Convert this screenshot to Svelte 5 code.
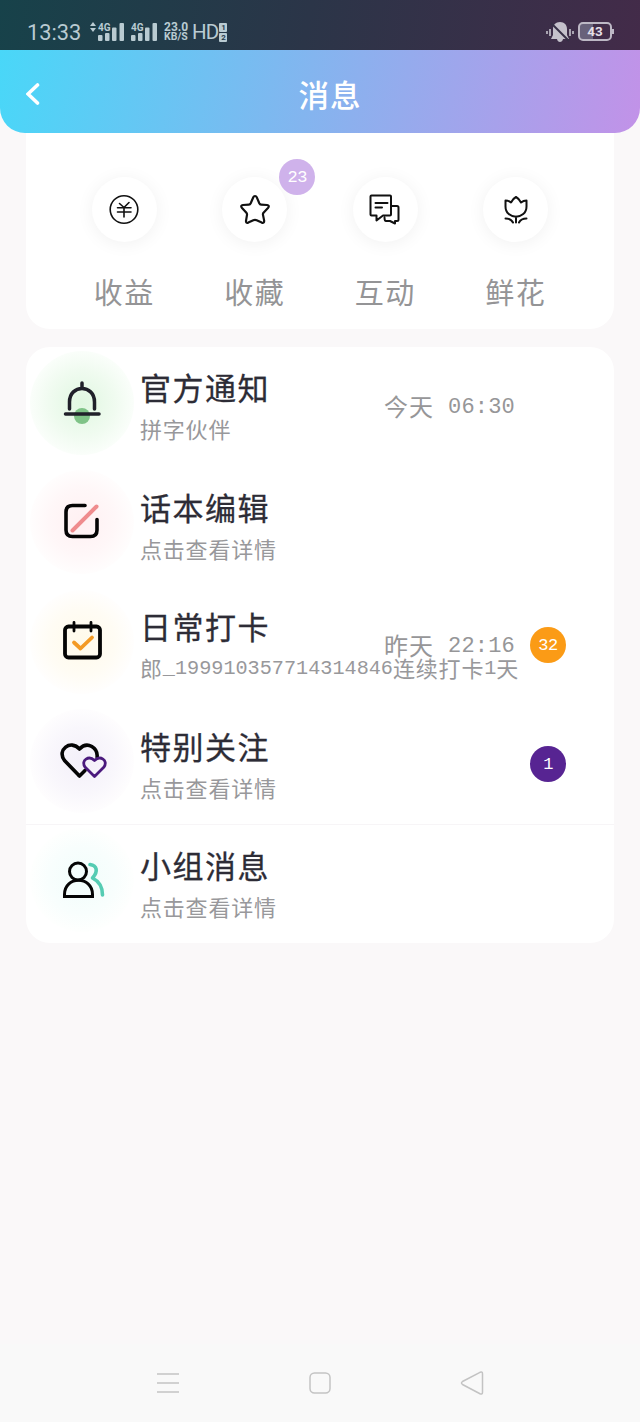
<script>
	const services = [
		{ icon: 'income', label: '收益' },
		{ icon: 'star', label: '收藏', badge: 23 },
		{ icon: 'chat', label: '互动' },
		{ icon: 'flower', label: '鲜花' }
	];

	const messages = [
		{ icon: 'bell', title: '官方通知', text: '拼字伙伴', day: '今天', time: '06:30' },
		{ icon: 'edit', title: '话本编辑', text: '点击查看详情' },
		{
			icon: 'calendar',
			title: '日常打卡',
			text: '郎_199910357714314846连续打卡1天',
			day: '昨天',
			time: '22:16',
			badge: 32
		},
		{ icon: 'heart', title: '特别关注', text: '点击查看详情', badge: 1 },
		{ icon: 'group', title: '小组消息', text: '点击查看详情' }
	];

	// digits use a narrower face than the Chinese characters
	const runs = (text) => text.match(/[\x20-\x7e]+|[^\x20-\x7e]+/g);
	const isLatin = (run) => /^[\x20-\x7e]/.test(run);
</script>

{#snippet signal()}
	<svg class="signal" width="27" height="20" viewBox="0 0 27 20">
		<text x="0" y="8.5">4G</text>
		<rect x="0" y="13" width="4.5" height="6" rx="1" />
		<rect x="7" y="11" width="4.5" height="8" rx="1" />
		<rect x="14" y="5.5" width="4.5" height="13.5" rx="1" />
		<rect x="21.5" y="1" width="4.5" height="18" rx="1" />
	</svg>
{/snippet}

<div class="screen">
	<div class="status">
		<span class="clock">13:33</span>
		<svg class="arrows" width="6" height="10" viewBox="0 0 6 10">
			<path d="M0 4 3 0l3 4zM0 6l3 4 3-4z" />
		</svg>
		{@render signal()}
		{@render signal()}
		<div class="speed"><span>23.0</span><span>KB/S</span></div>
		<span class="hd">HD</span>
		<div class="sims"><span>1</span><span>2</span></div>
		<svg class="mute" width="28" height="22" viewBox="0 0 28 22">
			<path d="M14 1c4.5 0 7 3 7 7v6l2 4H5l2-4V8c0-4 2.5-7 7-7zM11 18h6c-.5 4-5.5 4-6 0z" />
			<path class="slash" d="M5 2l18 18" />
			<path class="wave" d="M1 10v3M4 8v7M24 8v7M27 10v3" />
		</svg>
		<div class="battery"><span>43</span></div>
	</div>

	<header>
		<button class="back" type="button" aria-label="返回">
			<svg width="14" height="24" viewBox="0 0 14 24"><path d="M11.5 3 2 12l9.5 9" /></svg>
		</button>
		<h1>消息</h1>
	</header>

	<main>
		<section class="card services">
			{#each services as service}
				<div class="service">
					<div class="circle">
						<svg width="34" height="34" viewBox="0 0 34 34">
							{#if service.icon === 'income'}
								<g stroke-width="1.6">
									<circle cx="17" cy="16.5" r="13.8" />
									<path d="M12.5 10.5l4.500 4 5-5M10.500 14.800h13.500M10.500 19h13.500M17 14.500v9.500" />
								</g>
							{:else if service.icon === 'star'}
								<path d="M17 3q1.200 0 1.700 1.200l2.600 6q.6 1.300 1.800 1.400l5.900.4q2.800.5 1.200 2.700l-4.700 5q-.8 1-.5 2.200l1.200 6q0 2.500-2.500 1.700l-5-2.300q-1.700-.8-3.400 0l-5 2.300q-2.500.8-2.300-1.700l1-6q.2-1.200-.6-2.200l-4.600-5q-1.600-2.200 1.200-2.700l5.900-.4q1.200-.1 1.800-1.400l2.600-6q.5-1.200 1.700-1.200z" stroke-width="2.200" />
							{:else if service.icon === 'chat'}
								<path d="M3.500 2.500h18.500q1 0 1 1v18q0 1-1 1h-7l-6.500 5v-5h-5q-1 0-1-1v-18q0-1 1-1zM7.500 10h12M7.500 14.500h6.500M23 13h6q1.500 0 1.500 1.500v12q0 1.500-1.500 1.500h-2v2.500l-5-2.500h-4q-1.500 0-1.500-3.500" />
							{:else}
								<path d="M6.500 7.500q3 0 5.500 2 2-4 5-5.500 3 1.500 5 5.500 2.500-2 5.500-2v6c0 13.500-21 13.500-21 0zM17 23.500v6M6.500 25.500q5.500 0 7.500 4M27.500 25.500q-5.500 0-7.500 4" />
							{/if}
						</svg>
						{#if service.badge}
							<span class="badge lilac">{service.badge}</span>
						{/if}
					</div>
					<span class="label">{service.label}</span>
				</div>
			{/each}
		</section>

		<section class="card messages">
			{#each messages as message}
				<article class="row">
					<div class="glow {message.icon}">
						<svg width="50" height="50" viewBox="0 0 50 50">
							{#if message.icon === 'bell'}
								<circle cx="25" cy="38" r="8" fill="#7fc387" stroke="none" />
								<path d="M12.5 31v-7c0-18 25-18 25 0v7M25 10v-5M8.500 36h33.500" stroke="#20202a" stroke-width="3.500" />
							{:else if message.icon === 'edit'}
								<path d="M28 8.500h-12.500q-6.500 0-6.500 6.500v18q0 6.500 6.500 6.500h18q6.500 0 6.500-6.500v-10.500" stroke-width="3.600" />
								<path d="M15.500 33.500 39.500 9.500" stroke="#ef8c8e" stroke-width="4" />
							{:else if message.icon === 'calendar'}
								<rect x="8" y="9.500" width="35" height="31" rx="3.500" stroke-width="3.800" />
								<path d="M17 5.500v8.500M34 5.500v8.500" stroke-width="2.800" />
								<path d="M17 25.500l6.500 6 11.500-11" stroke="#f39a24" stroke-width="3.800" />
							{:else if message.icon === 'heart'}
								<path d="M22.500 40 7.500 24.500C-.500 14 13.500 3 22.500 13c8-8.500 19-1 17.500 9" stroke-width="3.600" stroke-linecap="butt" />
								<path d="M22.500 40l5.500-5.500" stroke-width="3.600" />
								<path d="M37.500 40.500l-9.500-9.500c-4.500-7 4-12 9.500-6.500 5.500-5.500 14-.5 9.500 6.500z" stroke="#4b1a7d" stroke-width="2.800" />
							{:else}
								<circle cx="21" cy="16.500" r="8.500" stroke-width="3" />
								<path d="M7.500 41.500v-2c0-19 28-19 28 0v2z" stroke-width="3" stroke-linejoin="miter" />
								<path d="M33 9.500c7 1 8.500 7 2.500 13.500 6 3 10 8 10 17" stroke="#55ccb3" stroke-width="3.600" />
							{/if}
						</svg>
					</div>
					<div class="body">
						<h2>{message.title}</h2>
						<p>{#each runs(message.text) as run}<span class:latin={isLatin(run)}>{run}</span>{/each}</p>
					</div>
					{#if message.time}
						<div class="time">{message.day}<span>{message.time}</span></div>
					{/if}
					{#if message.badge}
						<span class="badge" class:orange={message.badge > 9} class:purple={message.badge <= 9}>{message.badge}</span>
					{/if}
				</article>
			{/each}
		</section>
	</main>

	<nav>
		<svg width="24" height="26" viewBox="0 0 24 26"><path d="M1 4h22M1 13h22M1 22h22" /></svg>
		<svg width="24" height="26" viewBox="0 0 24 26"><rect x="2" y="3" width="20" height="20" rx="4.5" /></svg>
		<svg width="24" height="26" viewBox="0 0 24 26"><path d="M20 2.300 2.500 11.500q-2 1.500 0 3l17.500 9.200q2.500 1 2.500-1.500v-18.500q0-2.500-2.500-1.400z" /></svg>
	</nav>
</div>

<style>
	:global(body) {
		background: #faf8f9;
	}

	.screen {
		display: flex;
		flex-direction: column;
		height: 1422px;
		background: #faf8f9;
		font-family: "Noto Sans CJK SC", sans-serif;
		overflow: hidden;
	}

	h1,
	h2,
	p {
		margin: 0;
		font-weight: 400;
	}

	.status {
		display: flex;
		align-items: center;
		box-sizing: border-box;
		height: 50px;
		padding: 14px 26px 0 27px;
		background: linear-gradient(100deg, #17424a, #2b3548 48%, #432b49);
		color: #b9cbd2;
		fill: #b9cbd2;
		font-family: Roboto, sans-serif;
	}

	.clock {
		width: 63px;
		font-size: 21.8px;
	}

	.arrows {
		margin: -11px 2px 0 0;
	}

	.signal {
		margin-right: 6px;
	}

	.signal text {
		font-size: 10px;
		font-weight: 700;
	}

	.speed {
		display: grid;
		width: 28px;
		font-size: 10.5px;
		font-weight: 700;
		line-height: 10.5px;
	}

	.speed span:first-child {
		font-size: 12px;
	}

	.hd {
		font-size: 20.5px;
		letter-spacing: -0.8px;
	}

	.sims {
		display: grid;
		gap: 1px;
		margin-left: 1px;
	}

	.sims span {
		width: 8px;
		height: 9px;
		background: #b9cbd2;
		color: #25394a;
		border-radius: 1px;
		font-size: 8px;
		font-weight: 700;
		line-height: 9px;
		text-align: center;
	}

	.mute {
		margin-left: auto;
		fill: #c4c1cb;
	}

	.slash {
		stroke: #352f45;
		stroke-width: 2;
	}

	.wave {
		stroke: #c4c1cb;
		stroke-width: 1.6;
	}

	.battery {
		position: relative;
		box-sizing: border-box;
		width: 34px;
		height: 19px;
		margin: -1px 2px 0 4px;
		border: 2px solid #bdb8c5;
		border-radius: 5px;
		background: linear-gradient(90deg, #68617a 42%, transparent 42%);
		color: #e3dfe7;
		font-size: 13.5px;
		font-weight: 700;
		line-height: 15px;
		text-align: center;
	}

	.battery::after {
		content: '';
		position: absolute;
		top: 5px;
		right: -4px;
		width: 2px;
		height: 5px;
		background: #bdb8c5;
	}

	header {
		display: grid;
		grid-template-columns: 90px 1fr 70px;
		align-items: center;
		height: 83px;
		border-radius: 0 0 25px 25px;
		background: linear-gradient(100deg, #49d7f8, #83b5ef 48%, #c292e8);
		color: #fff;
	}

	.back {
		display: flex;
		padding: 5px 0 0 26px;
		border: 0;
		background: none;
	}

	.back path {
		fill: none;
		stroke: #fff;
		stroke-width: 3.6;
		stroke-linecap: round;
	}

	h1 {
		padding-top: 5px;
		font-size: 30.5px;
		font-weight: 500;
		letter-spacing: 1px;
		line-height: 40px;
		text-align: center;
	}

	main {
		display: grid;
		gap: 18px;
		padding: 0 26px;
	}

	.card {
		border-radius: 24px;
		background: #fff;
	}

	.services {
		display: grid;
		grid-template-columns: repeat(4, 1fr);
		box-sizing: border-box;
		height: 196px;
		padding: 44px 33px 0;
		border-radius: 0 0 24px 24px;
	}

	.service {
		display: flex;
		flex-direction: column;
		align-items: center;
		gap: 31px;
	}

	.circle {
		position: relative;
		display: grid;
		place-items: center;
		width: 65px;
		height: 65px;
		border-radius: 50%;
		background: #fff;
		box-shadow: 0 2px 18px rgba(0, 0, 0, 0.06);
	}

	.circle svg {
		fill: none;
		stroke: #111;
		stroke-width: 2;
		stroke-linecap: round;
		stroke-linejoin: round;
	}

	.label {
		color: #949496;
		font-size: 29px;
		letter-spacing: 1.5px;
		line-height: 36px;
	}

	.badge {
		display: grid;
		place-items: center;
		width: 36px;
		height: 36px;
		border-radius: 50%;
		color: #fff;
		font-family: "Liberation Mono", monospace;
		font-size: 17px;
		letter-spacing: -0.5px;
	}

	.lilac {
		position: absolute;
		top: -18px;
		right: -28px;
		background: #cfb2eb;
	}

	.orange {
		background: #fb9b16;
	}

	.purple {
		background: #572492;
	}

	.messages {
		display: grid;
		grid-template-rows: 119.5px 119.5px 119.5px 118.5px 119px;
	}

	.row {
		display: grid;
		grid-template-columns: 114px 1fr auto 51px 48px;
		align-items: center;
	}

	.row > * {
		grid-row: 1;
	}

	.row:last-child {
		border-top: 1px solid #f7f5f7;
	}

	.glow {
		display: grid;
		place-items: center;
		width: 104px;
		height: 104px;
		margin: -8px 0 0 4px;
		border-radius: 50%;
	}

	.glow svg {
		fill: none;
		stroke: #050505;
		stroke-width: 3.2;
		stroke-linecap: round;
		stroke-linejoin: round;
	}

	.bell {
		background: radial-gradient(#e0f7e1, #f0fbf0 45%, #fafefa 70%);
	}

	.edit {
		background: radial-gradient(#fff0f2, #fff7f8 45%, #fffdfd 70%);
	}

	.calendar {
		background: radial-gradient(#fffaea, #fffcf4 45%, #fffefd 70%);
	}

	.heart {
		background: radial-gradient(#f3eff9, #f9f7fc 45%, #fefdfe 70%);
	}

	.group {
		background: radial-gradient(#f1fdfb, #f8fefd 45%, #fefffe 70%);
	}

	.body {
		grid-column: 2 / 5;
		align-self: start;
		padding-top: 20px;
		white-space: nowrap;
	}

	h2 {
		color: #2d2c36;
		font-size: 31px;
		letter-spacing: 1.5px;
		line-height: 40px;
		-webkit-text-stroke: 0.3px #2d2c36;
	}

	p {
		display: flex;
		align-items: center;
		height: 28px;
		margin-top: 7px;
		color: #98989b;
		font-size: 22px;
		letter-spacing: 0.8px;
		line-height: 28px;
	}

	.latin {
		padding-top: 3px;
		font-family: "Liberation Mono", monospace;
		font-size: 20.2px;
		letter-spacing: 0;
	}

	.time {
		display: flex;
		grid-column: 3;
		align-items: center;
		gap: 14px;
		margin-top: -2px;
		color: #969698;
		font-size: 24px;
		letter-spacing: 1px;
	}

	.time span {
		padding-top: 4px;
		font-family: "Liberation Mono", monospace;
		font-size: 22px;
	 	letter-spacing: 0.2px;
	}

	.row .badge {
		grid-column: 4;
		margin: -1px 0 0 15px;
	}

	nav {
		display: flex;
		align-items: center;
		justify-content: center;
		gap: 128px;
		height: 78px;
		margin-top: auto;
		background: #f9f9f9;
	}

	nav svg {
		fill: none;
		stroke: #c3c3c3;
		stroke-width: 1.5;
	}
</style>
